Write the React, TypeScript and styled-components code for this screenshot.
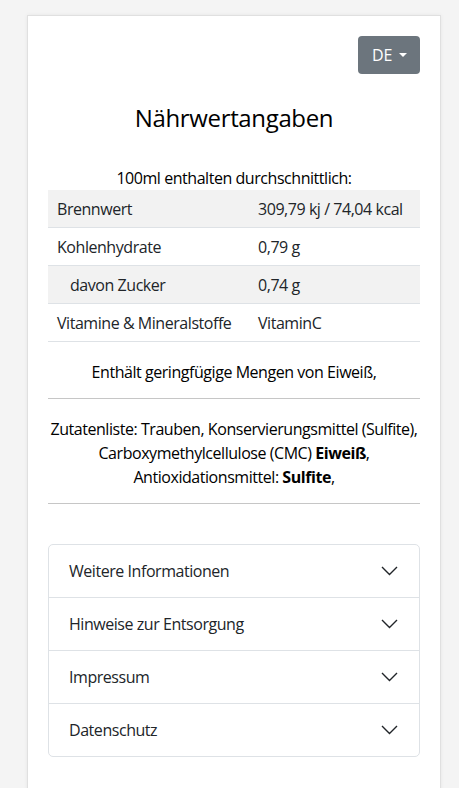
import React from 'react'
import styled, { createGlobalStyle } from 'styled-components'

const GlobalStyle = createGlobalStyle`
  html, body {
    margin: 0;
    padding: 0;
    background: #f4f4f4;
  }
  body {
    font-family: "Open Sans", "Noto Sans", sans-serif;
    font-size: 16px;
    line-height: 24px;
    letter-spacing: -0.45px;
    color: #212529;
  }
`

const Card = styled.div`
  margin: 15px 18px 0 27px;
  padding: 20px 20px 40px 20px;
  background: #fff;
  border: 1px solid #e0e0e0;
  box-shadow: 0 0 4px rgba(0, 0, 0, 0.06);
  min-height: 760px;
  box-sizing: border-box;
`

const Toolbar = styled.div`
  display: flex;
  justify-content: flex-end;
`

const LangButton = styled.button`
  display: flex;
  align-items: center;
  height: 38px;
  padding: 0 13px 0 14px;
  background: #6c757d;
  color: #fff;
  border: none;
  border-radius: 4px;
  font-family: inherit;
  font-size: 16px;
  letter-spacing: -0.3px;

  &::after {
    content: '';
    display: inline-block;
    margin-left: 7px;
    border-top: 4.8px solid #fff;
    border-left: 4.2px solid transparent;
    border-right: 4.2px solid transparent;
  }
`

const Title = styled.h1`
  margin: 29px 0 0;
  font-size: 24px;
  font-weight: 400;
  line-height: 29px;
  letter-spacing: -0.35px;
  text-align: center;
  color: #000;
`

const Lead = styled.p`
  margin: 34px 0 0;
  text-align: center;
  color: #000;
`

const Table = styled.div`
  display: grid;
  grid-template-columns: 201px 1fr;
`

const Row = styled.div<{ $striped?: boolean }>`
  display: contents;

  & > div {
    background: ${(p) => (p.$striped ? '#f2f2f2' : '#fff')};
  }
`

const Cell = styled.div<{ $indent?: boolean }>`
  padding: 7px 9px 6px ${(p) => (p.$indent ? '22px' : '9px')};
  border-bottom: 1px solid #dee2e6;
  white-space: nowrap;
`

const Note = styled.p`
  margin: 18px 0 14px;
  text-align: center;
  color: #000;
`

const Rule = styled.hr`
  margin: 0;
  border: none;
  border-top: 1px solid #c6c6c6;
`

const Accordion = styled.div`
  margin-top: 40px;
  border: 1px solid #dee2e6;
  border-radius: 5px;
  overflow: hidden;
`

const Item = styled.div`
  display: flex;
  align-items: center;
  justify-content: space-between;
  height: 52px;
  padding: 0 21px 0 20px;
  border-top: 1px solid #dee2e6;

  &:first-child {
    border-top: none;
  }
`

const Chevron = () => (
  <svg width="17" height="10" viewBox="0 0 17 10" fill="none">
    <polyline points="1,1 8.5,8.5 16,1" stroke="#212529" strokeWidth="1.4" />
  </svg>
)

const rows = [
  { label: 'Brennwert', value: '309,79 kj / 74,04 kcal' },
  { label: 'Kohlenhydrate', value: '0,79 g' },
  { label: 'davon Zucker', value: '0,74 g', indent: true },
  { label: 'Vitamine & Mineralstoffe', value: 'VitaminC' },
]

const sections = ['Weitere Informationen', 'Hinweise zur Entsorgung', 'Impressum', 'Datenschutz']

export default function App() {
  return (
    <>
      <GlobalStyle />
      <Card>
        <Toolbar>
          <LangButton>DE</LangButton>
        </Toolbar>
        <Title>Nährwertangaben</Title>
        <Lead>100ml enthalten durchschnittlich:</Lead>
        <Table>
          {rows.map((r, i) => (
            <Row key={r.label} $striped={i % 2 === 0}>
              <Cell $indent={r.indent}>{r.label}</Cell>
              <Cell>{r.value}</Cell>
            </Row>
          ))}
        </Table>
        <Note>Enthält geringfügige Mengen von Eiweiß,</Note>
        <Rule />
        <Note>
          Zutatenliste: Trauben, Konservierungsmittel (Sulfite), Carboxymethylcellulose (CMC){' '}
          <b>Eiweiß</b>, Antioxidationsmittel: <b>Sulfite</b>,
        </Note>
        <Rule />
        <Accordion>
          {sections.map((s) => (
            <Item key={s}>
              <span>{s}</span>
              <Chevron />
            </Item>
          ))}
        </Accordion>
      </Card>
    </>
  )
}
